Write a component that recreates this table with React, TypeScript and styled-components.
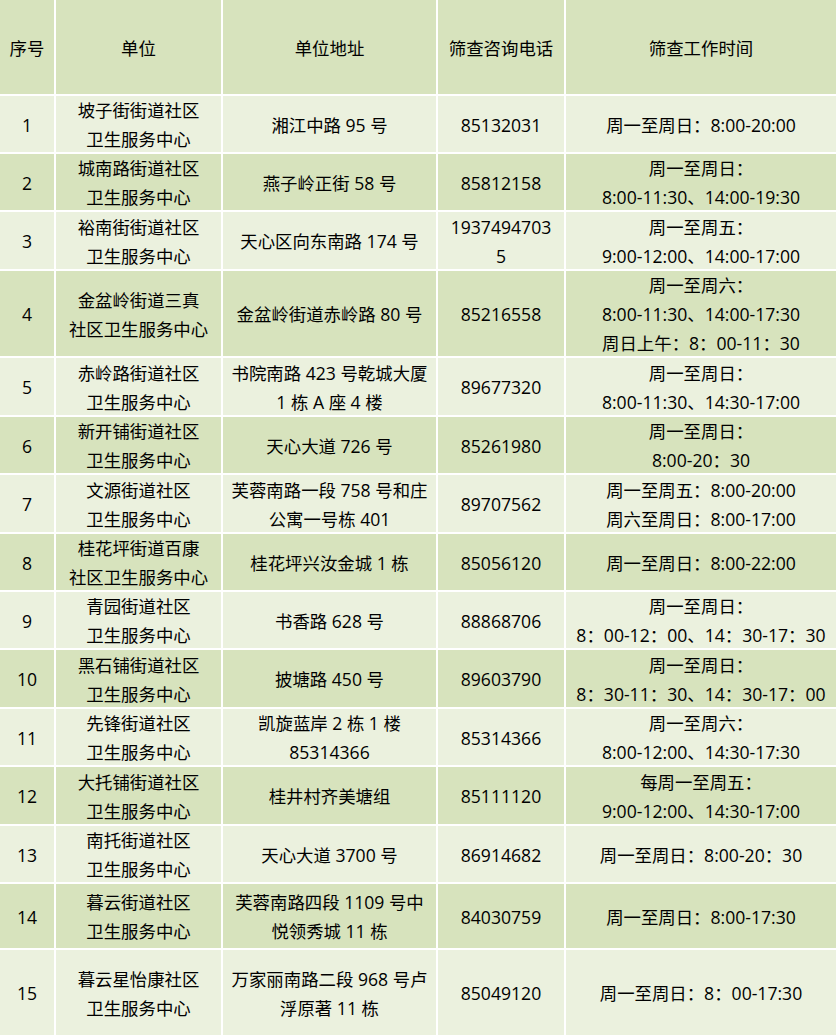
import React from 'react'
import styled, { createGlobalStyle } from 'styled-components'

const GlobalStyle = createGlobalStyle`
  html, body {
    margin: 0;
    padding: 0;
    background: #ffffff;
  }
`

const Table = styled.table`
  width: 836px;
  table-layout: fixed;
  border-collapse: collapse;
  font-family: "Noto Sans CJK SC", "Noto Sans CJK TC", sans-serif;
  font-size: 17.4px;
  line-height: 29px;
  color: #000;
`

const Row = styled.tr<{ $dark: boolean; $h: number }>`
  height: ${({ $h }) => $h}px;
  background: ${({ $dark }) => ($dark ? '#d7e3bd' : '#ebf1de')};
`

const Cell = styled.td`
  padding: 0 1px;
  text-align: center;
  vertical-align: middle;
  border-right: 2px solid #ffffff;
  border-bottom: 2px solid #ffffff;
  white-space: nowrap;

  &:last-child {
    border-right: none;
  }
`

const HeadCell = styled(Cell).attrs({ as: 'th' })`
  font-weight: normal;
`

// lines overlap the cell border a little, as in the source document
const Text = styled.div`
  margin: -1px 0;
`

// digits and ascii punctuation are wider in the source than in Noto CJK
const Latin = styled.span`
  font-family: "Open Sans", sans-serif;
  font-size: 17.6px;
  line-height: 1;
`

interface Site {
  no: number
  unit: string[]
  address: string[]
  phone: string[]
  hours: string[]
}

const sites: Site[] = [
  { no: 1, unit: ['坡子街街道社区', '卫生服务中心'], address: ['湘江中路 95 号'], phone: ['85132031'], hours: ['周一至周日：8:00-20:00'] },
  { no: 2, unit: ['城南路街道社区', '卫生服务中心'], address: ['燕子岭正街 58 号'], phone: ['85812158'], hours: ['周一至周日：', '8:00-11:30、14:00-19:30'] },
  { no: 3, unit: ['裕南街街道社区', '卫生服务中心'], address: ['天心区向东南路 174 号'], phone: ['1937494703', '5'], hours: ['周一至周五：', '9:00-12:00、14:00-17:00'] },
  { no: 4, unit: ['金盆岭街道三真', '社区卫生服务中心'], address: ['金盆岭街道赤岭路 80 号'], phone: ['85216558'], hours: ['周一至周六：', '8:00-11:30、14:00-17:30', '周日上午：8：00-11：30'] },
  { no: 5, unit: ['赤岭路街道社区', '卫生服务中心'], address: ['书院南路 423 号乾城大厦', '1 栋 A 座 4 楼'], phone: ['89677320'], hours: ['周一至周日：', '8:00-11:30、14:30-17:00'] },
  { no: 6, unit: ['新开铺街道社区', '卫生服务中心'], address: ['天心大道 726 号'], phone: ['85261980'], hours: ['周一至周日：', '8:00-20：30'] },
  { no: 7, unit: ['文源街道社区', '卫生服务中心'], address: ['芙蓉南路一段 758 号和庄', '公寓一号栋 401'], phone: ['89707562'], hours: ['周一至周五：8:00-20:00', '周六至周日：8:00-17:00'] },
  { no: 8, unit: ['桂花坪街道百康', '社区卫生服务中心'], address: ['桂花坪兴汝金城 1 栋'], phone: ['85056120'], hours: ['周一至周日：8:00-22:00'] },
  { no: 9, unit: ['青园街道社区', '卫生服务中心'], address: ['书香路 628 号'], phone: ['88868706'], hours: ['周一至周日：', '8：00-12：00、14：30-17：30'] },
  { no: 10, unit: ['黑石铺街道社区', '卫生服务中心'], address: ['披塘路 450 号'], phone: ['89603790'], hours: ['周一至周日：', '8：30-11：30、14：30-17：00'] },
  { no: 11, unit: ['先锋街道社区', '卫生服务中心'], address: ['凯旋蓝岸 2 栋 1 楼', '85314366'], phone: ['85314366'], hours: ['周一至周六：', '8:00-12:00、14:30-17:30'] },
  { no: 12, unit: ['大托铺街道社区', '卫生服务中心'], address: ['桂井村齐美塘组'], phone: ['85111120'], hours: ['每周一至周五：', '9:00-12:00、14:30-17:00'] },
  { no: 13, unit: ['南托街道社区', '卫生服务中心'], address: ['天心大道 3700 号'], phone: ['86914682'], hours: ['周一至周日：8:00-20：30'] },
  { no: 14, unit: ['暮云街道社区', '卫生服务中心'], address: ['芙蓉南路四段 1109 号中', '悦领秀城 11 栋'], phone: ['84030759'], hours: ['周一至周日：8:00-17:30'] },
  { no: 15, unit: ['暮云星怡康社区', '卫生服务中心'], address: ['万家丽南路二段 968 号卢', '浮原著 11 栋'], phone: ['85049120'], hours: ['周一至周日：8：00-17:30'] },
]

const rowHeights = [58, 58, 59, 87, 59, 58, 59, 58, 58, 59, 58, 59, 58, 66, 87]

const renderLine = (line: string) =>
  line.split(/([\x20-\x7e]+)/).map((part, i) =>
    i % 2 === 1 ? <Latin key={i}>{part}</Latin> : part
  )

const Lines: React.FC<{ lines: string[] }> = ({ lines }) => (
  <Text>
    {lines.map((l, i) => (
      <React.Fragment key={i}>
        {i > 0 && <br />}
        {renderLine(l)}
      </React.Fragment>
    ))}
  </Text>
)

export default function App() {
  return (
    <>
      <GlobalStyle />
      <Table lang="zh-CN">
        <colgroup>
          <col style={{ width: 55 }} />
          <col style={{ width: 167 }} />
          <col style={{ width: 215 }} />
          <col style={{ width: 128 }} />
          <col style={{ width: 271 }} />
        </colgroup>
        <thead>
          <Row $dark $h={95}>
            <HeadCell>序号</HeadCell>
            <HeadCell>单位</HeadCell>
            <HeadCell>单位地址</HeadCell>
            <HeadCell>筛查咨询电话</HeadCell>
            <HeadCell>筛查工作时间</HeadCell>
          </Row>
        </thead>
        <tbody>
          {sites.map((s, i) => (
            <Row key={s.no} $dark={s.no % 2 === 0} $h={rowHeights[i]}>
              <Cell><Lines lines={[String(s.no)]} /></Cell>
              <Cell><Lines lines={s.unit} /></Cell>
              <Cell><Lines lines={s.address} /></Cell>
              <Cell><Lines lines={s.phone} /></Cell>
              <Cell><Lines lines={s.hours} /></Cell>
            </Row>
          ))}
        </tbody>
      </Table>
    </>
  )
}
